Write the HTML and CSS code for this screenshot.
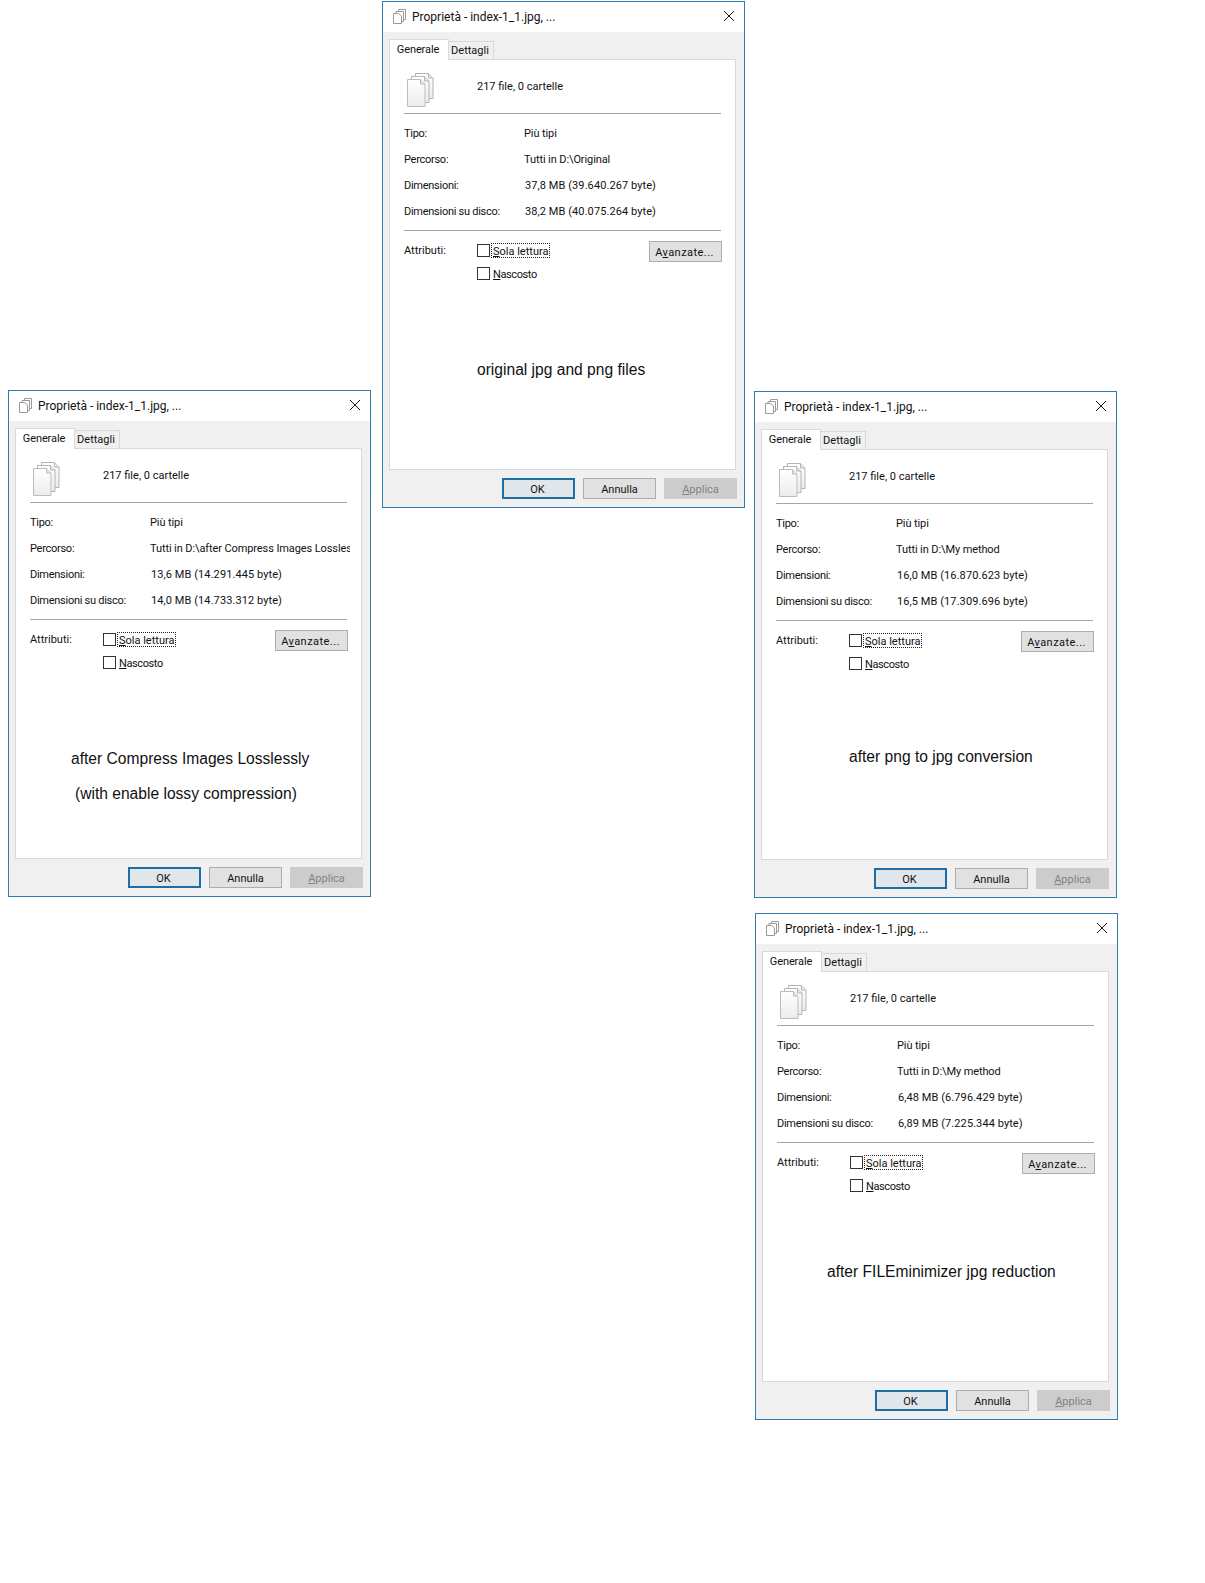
FILE: index.html
```html
<!DOCTYPE html>
<html lang="it">
<head>
<meta charset="utf-8">
<title>Proprietà</title>
<link rel="stylesheet" href="styles.css">
</head>
<body>
<svg class="defs" width="0" height="0" aria-hidden="true">
  <defs>
    <linearGradient id="pg" x1="0" y1="0" x2="0" y2="1">
      <stop offset="0" stop-color="#ffffff"/>
      <stop offset="1" stop-color="#ececec"/>
    </linearGradient>
    <symbol id="pages-large" viewBox="0 0 27 34">
      <path d="M8.5 .5H21.5L26 5V25.5H8.5Z" fill="url(#pg)" stroke="#b4b4b4"/>
      <path d="M21.5 .5V5H26" fill="#e8e8e8" stroke="#b4b4b4"/>
      <path d="M4.5 3.5H17.5L22 8V29.5H4.5Z" fill="url(#pg)" stroke="#b4b4b4"/>
      <path d="M17.5 3.5V8H22" fill="#e8e8e8" stroke="#b4b4b4"/>
      <path d="M.5 6.5H13.5L18 11V33.5H.5Z" fill="url(#pg)" stroke="#bcbcbc"/>
      <path d="M13.5 6.5V11H18" fill="#e8e8e8" stroke="#bcbcbc"/>
    </symbol>
    <symbol id="pages-small" viewBox="0 0 13 15">
      <path d="M5.5 .5H12.5V10.5H5.5Z" fill="#fff" stroke="#9a9a9a"/>
      <path d="M3 2.5H10.5V12.5H3Z" fill="#fff" stroke="#9a9a9a"/>
      <path d="M.5 4.5H5.5L8.5 7V14.5H.5Z" fill="#fff" stroke="#9a9a9a"/>
    </symbol>
    <symbol id="close" viewBox="0 0 10 10">
      <path d="M0 0L10 10M10 0L0 10" stroke="#1a1a1a" fill="none"/>
    </symbol>
  </defs>
</svg>

<main class="desktop">

  <section class="win win-original">
    <header class="titlebar">
      <svg class="title-icon"><use href="#pages-small"/></svg>
      <span class="title-text">Proprietà - index-1_1.jpg, ...</span>
      <svg class="close-icon"><use href="#close"/></svg>
    </header>
    <nav class="tabs"><span class="tab tab-active">Generale</span><span class="tab">Dettagli</span></nav>
    <div class="panel">
      <div class="summary">
        <svg class="pages-icon"><use href="#pages-large"/></svg>
        <span class="summary-text">217 file, 0 cartelle</span>
      </div>
      <hr class="rule">
      <dl class="props">
        <dt>Tipo:</dt><dd>Più tipi</dd>
        <dt>Percorso:</dt><dd>Tutti in D:\Original</dd>
        <dt>Dimensioni:</dt><dd class="num">37,8 MB (39.640.267 byte)</dd>
        <dt>Dimensioni su disco:</dt><dd class="num">38,2 MB (40.075.264 byte)</dd>
      </dl>
      <hr class="rule">
      <div class="attrs">
        <span class="attrs-label">Attributi:</span>
        <div class="checks">
          <div class="check"><span class="box"></span><span class="check-label focus"><u>S</u>ola lettura</span></div>
          <div class="check"><span class="box"></span><span class="check-label"><u>N</u>ascosto</span></div>
        </div>
        <span class="btn btn-adv">A<u>v</u>anzate...</span>
      </div>
      <div class="captions"><p class="caption">original jpg and png files</p></div>
    </div>
    <footer class="actions">
      <span class="btn btn-ok">OK</span><span class="btn">Annulla</span><span class="btn btn-off"><u>A</u>pplica</span>
    </footer>
  </section>

  <section class="win win-lossless">
    <header class="titlebar">
      <svg class="title-icon"><use href="#pages-small"/></svg>
      <span class="title-text">Proprietà - index-1_1.jpg, ...</span>
      <svg class="close-icon"><use href="#close"/></svg>
    </header>
    <nav class="tabs"><span class="tab tab-active">Generale</span><span class="tab">Dettagli</span></nav>
    <div class="panel">
      <div class="summary">
        <svg class="pages-icon"><use href="#pages-large"/></svg>
        <span class="summary-text">217 file, 0 cartelle</span>
      </div>
      <hr class="rule">
      <dl class="props">
        <dt>Tipo:</dt><dd>Più tipi</dd>
        <dt>Percorso:</dt><dd>Tutti in D:\after Compress Images Lossless</dd>
        <dt>Dimensioni:</dt><dd class="num">13,6 MB (14.291.445 byte)</dd>
        <dt>Dimensioni su disco:</dt><dd class="num">14,0 MB (14.733.312 byte)</dd>
      </dl>
      <hr class="rule">
      <div class="attrs">
        <span class="attrs-label">Attributi:</span>
        <div class="checks">
          <div class="check"><span class="box"></span><span class="check-label focus"><u>S</u>ola lettura</span></div>
          <div class="check"><span class="box"></span><span class="check-label"><u>N</u>ascosto</span></div>
        </div>
        <span class="btn btn-adv">A<u>v</u>anzate...</span>
      </div>
      <div class="captions">
        <p class="caption">after Compress Images Losslessly</p>
        <p class="caption caption-second">(with enable lossy compression)</p>
      </div>
    </div>
    <footer class="actions">
      <span class="btn btn-ok">OK</span><span class="btn">Annulla</span><span class="btn btn-off"><u>A</u>pplica</span>
    </footer>
  </section>

  <section class="win win-png">
    <header class="titlebar">
      <svg class="title-icon"><use href="#pages-small"/></svg>
      <span class="title-text">Proprietà - index-1_1.jpg, ...</span>
      <svg class="close-icon"><use href="#close"/></svg>
    </header>
    <nav class="tabs"><span class="tab tab-active">Generale</span><span class="tab">Dettagli</span></nav>
    <div class="panel">
      <div class="summary">
        <svg class="pages-icon"><use href="#pages-large"/></svg>
        <span class="summary-text">217 file, 0 cartelle</span>
      </div>
      <hr class="rule">
      <dl class="props">
        <dt>Tipo:</dt><dd>Più tipi</dd>
        <dt>Percorso:</dt><dd>Tutti in D:\My method</dd>
        <dt>Dimensioni:</dt><dd class="num">16,0 MB (16.870.623 byte)</dd>
        <dt>Dimensioni su disco:</dt><dd class="num">16,5 MB (17.309.696 byte)</dd>
      </dl>
      <hr class="rule">
      <div class="attrs">
        <span class="attrs-label">Attributi:</span>
        <div class="checks">
          <div class="check"><span class="box"></span><span class="check-label focus"><u>S</u>ola lettura</span></div>
          <div class="check"><span class="box"></span><span class="check-label"><u>N</u>ascosto</span></div>
        </div>
        <span class="btn btn-adv">A<u>v</u>anzate...</span>
      </div>
      <div class="captions"><p class="caption">after png to jpg conversion</p></div>
    </div>
    <footer class="actions">
      <span class="btn btn-ok">OK</span><span class="btn">Annulla</span><span class="btn btn-off"><u>A</u>pplica</span>
    </footer>
  </section>

  <section class="win win-minimizer">
    <header class="titlebar">
      <svg class="title-icon"><use href="#pages-small"/></svg>
      <span class="title-text">Proprietà - index-1_1.jpg, ...</span>
      <svg class="close-icon"><use href="#close"/></svg>
    </header>
    <nav class="tabs"><span class="tab tab-active">Generale</span><span class="tab">Dettagli</span></nav>
    <div class="panel">
      <div class="summary">
        <svg class="pages-icon"><use href="#pages-large"/></svg>
        <span class="summary-text">217 file, 0 cartelle</span>
      </div>
      <hr class="rule">
      <dl class="props">
        <dt>Tipo:</dt><dd>Più tipi</dd>
        <dt>Percorso:</dt><dd>Tutti in D:\My method</dd>
        <dt>Dimensioni:</dt><dd class="num">6,48 MB (6.796.429 byte)</dd>
        <dt>Dimensioni su disco:</dt><dd class="num">6,89 MB (7.225.344 byte)</dd>
      </dl>
      <hr class="rule">
      <div class="attrs">
        <span class="attrs-label">Attributi:</span>
        <div class="checks">
          <div class="check"><span class="box"></span><span class="check-label focus"><u>S</u>ola lettura</span></div>
          <div class="check"><span class="box"></span><span class="check-label"><u>N</u>ascosto</span></div>
        </div>
        <span class="btn btn-adv">A<u>v</u>anzate...</span>
      </div>
      <div class="captions"><p class="caption">after FILEminimizer jpg reduction</p></div>
    </div>
    <footer class="actions">
      <span class="btn btn-ok">OK</span><span class="btn">Annulla</span><span class="btn btn-off"><u>A</u>pplica</span>
    </footer>
  </section>

</main>
</body>
</html>
```

FILE: styles.css
```css
html, body {
  margin: 0;
  padding: 0;
  background: #fff;
}

.defs {
  display: block;
}

.desktop {
  position: relative;
  width: 1205px;
  height: 1583px;
  overflow: hidden;
  font-family: Roboto, "Open Sans", sans-serif;
  font-size: 11px;
  line-height: 18px;
  color: #111;
}

.win {
  position: absolute;
  box-sizing: border-box;
  width: 363px;
  height: 507px;
  border: 1px solid #2f7cae;
  background: #f0f0f0;
  display: flex;
  flex-direction: column;
}

.win-original { left: 382px; top: 1px; }
.win-lossless { left: 8px; top: 390px; }
.win-png { left: 754px; top: 391px; }
.win-minimizer { left: 755px; top: 913px; }

.titlebar {
  box-sizing: border-box;
  height: 30px;
  flex: none;
  background: #fff;
  display: flex;
  align-items: center;
  padding: 0 10px;
}

.title-icon {
  width: 13px;
  height: 15px;
  margin-bottom: 2px;
  flex: none;
}

.title-text {
  margin-left: 6px;
  flex: 1;
  font-size: 12px;
  color: #111;
}

.close-icon {
  width: 10px;
  height: 10px;
  margin-bottom: 2px;
  flex: none;
}

.tabs {
  height: 20px;
  margin-top: 7px;
  padding-left: 6px;
  flex: none;
  display: flex;
  align-items: flex-end;
}

.tab {
  box-sizing: border-box;
  height: 18px;
  width: 46px;
  margin-left: -1px;
  padding-right: 2px;
  border: 1px solid #d9d9d9;
  border-bottom: none;
  background: #f0f0f0;
  text-align: center;
  line-height: 18px;
}

.tab-active {
  position: relative;
  z-index: 1;
  height: 21px;
  width: 60px;
  margin-left: 0;
  margin-bottom: -1px;
  background: #fff;
  letter-spacing: -.1px;
  line-height: 20px;
}

.panel {
  box-sizing: border-box;
  width: 347px;
  height: 411px;
  margin-left: 6px;
  flex: none;
  border: 1px solid #d9d9d9;
  background: #fff;
  padding: 0 14px;
}

.summary {
  height: 53px;
  box-sizing: border-box;
  padding: 13px 0 0 3px;
  display: flex;
  align-items: flex-start;
}

.pages-icon {
  width: 27px;
  height: 34px;
  flex: none;
}

.summary-text {
  margin: 5px 0 0 43px;
}

.rule {
  height: 1px;
  margin: 0;
  border: none;
  background: #a6a6a6;
}

.props {
  margin: 6px 0;
  display: grid;
  grid-template-columns: 120px 197px;
  grid-auto-rows: 26px;
  align-items: center;
}

.props dt,
.props dd {
  margin: 0;
  padding-top: 2px;
  white-space: nowrap;
}

.props dt {
  letter-spacing: -.27px;
}

.props dd {
  overflow: hidden;
  width: 200px;
  letter-spacing: -.1px;
}

.props .num {
  padding-left: 1px;
  box-sizing: border-box;
  letter-spacing: .08px;
}

.attrs {
  margin: 10px -1px 0 0;
  display: flex;
  align-items: flex-start;
}

.attrs-label {
  width: 73px;
  padding-top: 1px;
  flex: none;
}

.checks {
  flex: 1;
  padding-top: 2px;
  display: flex;
  flex-direction: column;
  gap: 8px;
}

.check {
  height: 15px;
  display: flex;
  align-items: center;
}

.box {
  box-sizing: border-box;
  width: 13px;
  height: 13px;
  flex: none;
  border: 1px solid #333;
  background: #fff;
}

.check-label {
  margin-left: 1px;
  padding: 3px 1px 0;
  border: 1px dotted transparent;
  line-height: 10px;
  letter-spacing: -.4px;
}

.check-label.focus {
  border-color: #222;
  letter-spacing: 0;
}

.btn {
  box-sizing: border-box;
  width: 73px;
  height: 21px;
  flex: none;
  border: 1px solid #adadad;
  background: #e1e1e1;
  text-align: center;
  line-height: 21px;
}

.btn-adv {
  letter-spacing: .45px;
  padding-right: 2px;
}

.btn-ok {
  border: 2px solid #1c6ea4;
  line-height: 19px;
  padding-right: 2px;
  background: #e1e6ea;
}

.btn-off {
  border-color: #cccccc;
  background: #cccccc;
  color: #838383;
}

.actions {
  margin-top: 8px;
  padding-right: 7px;
  display: flex;
  justify-content: flex-end;
  gap: 8px;
}

.captions {
  font-family: "Liberation Sans", Arial, sans-serif;
  font-size: 15.6px;
  line-height: 20px;
  color: #111;
}

.caption {
  margin: 0;
  white-space: nowrap;
}

.caption-second {
  margin-top: 15px;
  margin-left: 4px;
}

.win-original .captions { margin: 79px 0 0 73px; }
.win-lossless .captions { margin: 79px 0 0 41px; }
.win-png .captions { margin: 76px 0 0 73px; }
.win-minimizer .captions { margin: 69px 0 0 50px; }
```
